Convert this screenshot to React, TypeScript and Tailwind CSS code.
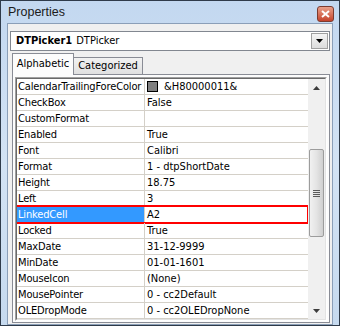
import React from "react";

const rows: [string, string][] = [
  ["CalendarTrailingForeColor", "&H80000011&"],
  ["CheckBox", "False"],
  ["CustomFormat", ""],
  ["Enabled", "True"],
  ["Font", "Calibri"],
  ["Format", "1 - dtpShortDate"],
  ["Height", "18.75"],
  ["Left", "3"],
  ["LinkedCell", "A2"],
  ["Locked", "True"],
  ["MaxDate", "31-12-9999"],
  ["MinDate", "01-01-1601"],
  ["MouseIcon", "(None)"],
  ["MousePointer", "0 - cc2Default"],
  ["OLEDropMode", "0 - cc2OLEDropNone"],
];

const font = { fontFamily: "'DejaVu Sans Condensed', 'Liberation Sans', sans-serif" };

function Row({ name, value, index }: { name: string; value: string; index: number }) {
  const selected = name === "LinkedCell";
  return (
    <div className={`relative flex h-[16px] shrink-0 ${selected ? "" : "border-b border-[#d4d0c8]"}`}>
      <div
        className={`w-[128px] shrink-0 overflow-hidden whitespace-nowrap pl-[1px] leading-[15px] tracking-[-0.15px] border-r border-[#d4d0c8] ${
          selected ? "bg-[#3399ff] text-white" : "text-black"
        }`}
      >
        {name}
      </div>
      <div className="flex flex-1 items-start whitespace-nowrap pl-[2px] leading-[15px] text-black">
        {index === 0 && <span className="mr-[6px] mt-[2px] h-[11px] w-[11px] shrink-0 border border-black bg-[#808080]" />}
        {value}
      </div>
      {selected && (
        <div className="pointer-events-none absolute left-[-3px] right-[-1px] top-[-2px] bottom-[-1px] border-2 border-[#ff0000]" />
      )}
    </div>
  );
}

export default function App() {
  return (
    <div className="w-[340px] h-[327px] bg-white" style={font}>
      <div className="flex h-[326px] flex-col border border-[#2f3b4a] bg-gradient-to-b from-[#c3d8f0] via-[#d3e3f4] to-[#c6daef] px-[6px] pb-[5px]">
        {/* Title bar */}
        <div className="flex h-[22px] shrink-0 items-center justify-between">
          <span className="pl-[1px] pt-[1px] text-[12.5px] text-[#1b1b1b]" style={{ fontFamily: "'Liberation Sans', Arial, sans-serif" }}>
            Properties
          </span>
          <div className="mr-[-1px] mt-[3px] flex h-[16px] w-[17px] items-center justify-center rounded-[3px] border border-[#7c3b2f] bg-gradient-to-b from-[#e8a08a] to-[#c4412a]">
            <svg width="9" height="8" viewBox="0 0 9 8">
              <path d="M1 1 L8 7 M8 1 L1 7" stroke="#ffffff" strokeWidth="2" />
            </svg>
          </div>
        </div>

        {/* Panel */}
        <div className="flex flex-1 flex-col border border-[#8b9fb8] bg-[#f0f0f0] px-[2px] pt-[7px] pb-[1px]">
          {/* Object combo */}
          <div className="flex h-[20px] shrink-0 items-center border border-[#828790] bg-white text-[11px]">
            <span className="pl-[5px] font-bold">DTPicker1</span>
            <span className="pl-[4px]">DTPicker</span>
            <div className="ml-auto mr-[1px] flex h-[16px] w-[17px] items-center justify-center border border-[#a0a0a0] bg-gradient-to-b from-[#f4f4f4] to-[#dcdcdc]">
              <svg width="7" height="4" viewBox="0 0 7 4">
                <path d="M0 0 H7 L3.5 4 Z" fill="#000" />
              </svg>
            </div>
          </div>

          {/* Tabs */}
          <div className="mt-[2px] flex h-[21px] shrink-0 items-end pl-[2px] text-[11px]">
            <div className="relative z-10 mb-[-1px] flex h-[22px] w-[62px] shrink-0 items-center justify-center border border-b-0 border-[#898c95] bg-[#fcfcfc]">
              Alphabetic
            </div>
            <div className="flex h-[17px] w-[69px] shrink-0 items-center justify-center border border-l-0 border-b-0 border-[#898c95] bg-gradient-to-b from-[#f2f2f2] to-[#e0e0e0]">
              Categorized
            </div>
          </div>

          {/* Tab page */}
          <div className="ml-[2px] flex flex-1 flex-col border border-[#898c95] bg-[#fcfcfc] px-[2px] pt-[2px] pb-[1px]">
            <div className="flex flex-1 overflow-hidden border border-t-[#a0a0a0] border-l-[#a0a0a0] border-b-white border-r-white">
              <div className="flex flex-1 overflow-hidden border border-t-[#696969] border-l-[#696969] border-b-[#e3e3e3] border-r-[#e3e3e3] bg-white">
                <div className="flex flex-1 flex-col overflow-hidden text-[11px]">
                  {rows.map((r, i) => (
                    <Row key={r[0]} name={r[0]} value={r[1]} index={i} />
                  ))}
                </div>
                {/* Scrollbar */}
                <div className="flex w-[17px] shrink-0 flex-col items-center bg-[#f0f0f0]">
                  <div className="flex h-[17px] w-full items-center justify-center">
                    <svg width="7" height="4" viewBox="0 0 7 4">
                      <path d="M0 4 H7 L3.5 0 Z" fill="#3c3c3c" />
                    </svg>
                  </div>
                  <div className="mt-[53px] flex h-[88px] w-[15px] items-center justify-center rounded-[2px] border border-[#9c9c9c] bg-gradient-to-r from-[#f1f1f1] via-[#e4e4e4] to-[#cfcfcf]">
                    <div className="flex flex-col gap-[1px]">
                      <div className="h-[1px] w-[7px] bg-[#5a5a5a]" />
                      <div className="h-[1px] w-[7px] bg-[#5a5a5a]" />
                      <div className="h-[1px] w-[7px] bg-[#5a5a5a]" />
                      <div className="h-[1px] w-[7px] bg-[#5a5a5a]" />
                    </div>
                  </div>
                  <div className="mt-auto flex h-[17px] w-full items-center justify-center">
                    <svg width="7" height="4" viewBox="0 0 7 4">
                      <path d="M0 0 H7 L3.5 4 Z" fill="#3c3c3c" />
                    </svg>
                  </div>
                </div>
              </div>
            </div>
          </div>
        </div>
      </div>
    </div>
  );
}
